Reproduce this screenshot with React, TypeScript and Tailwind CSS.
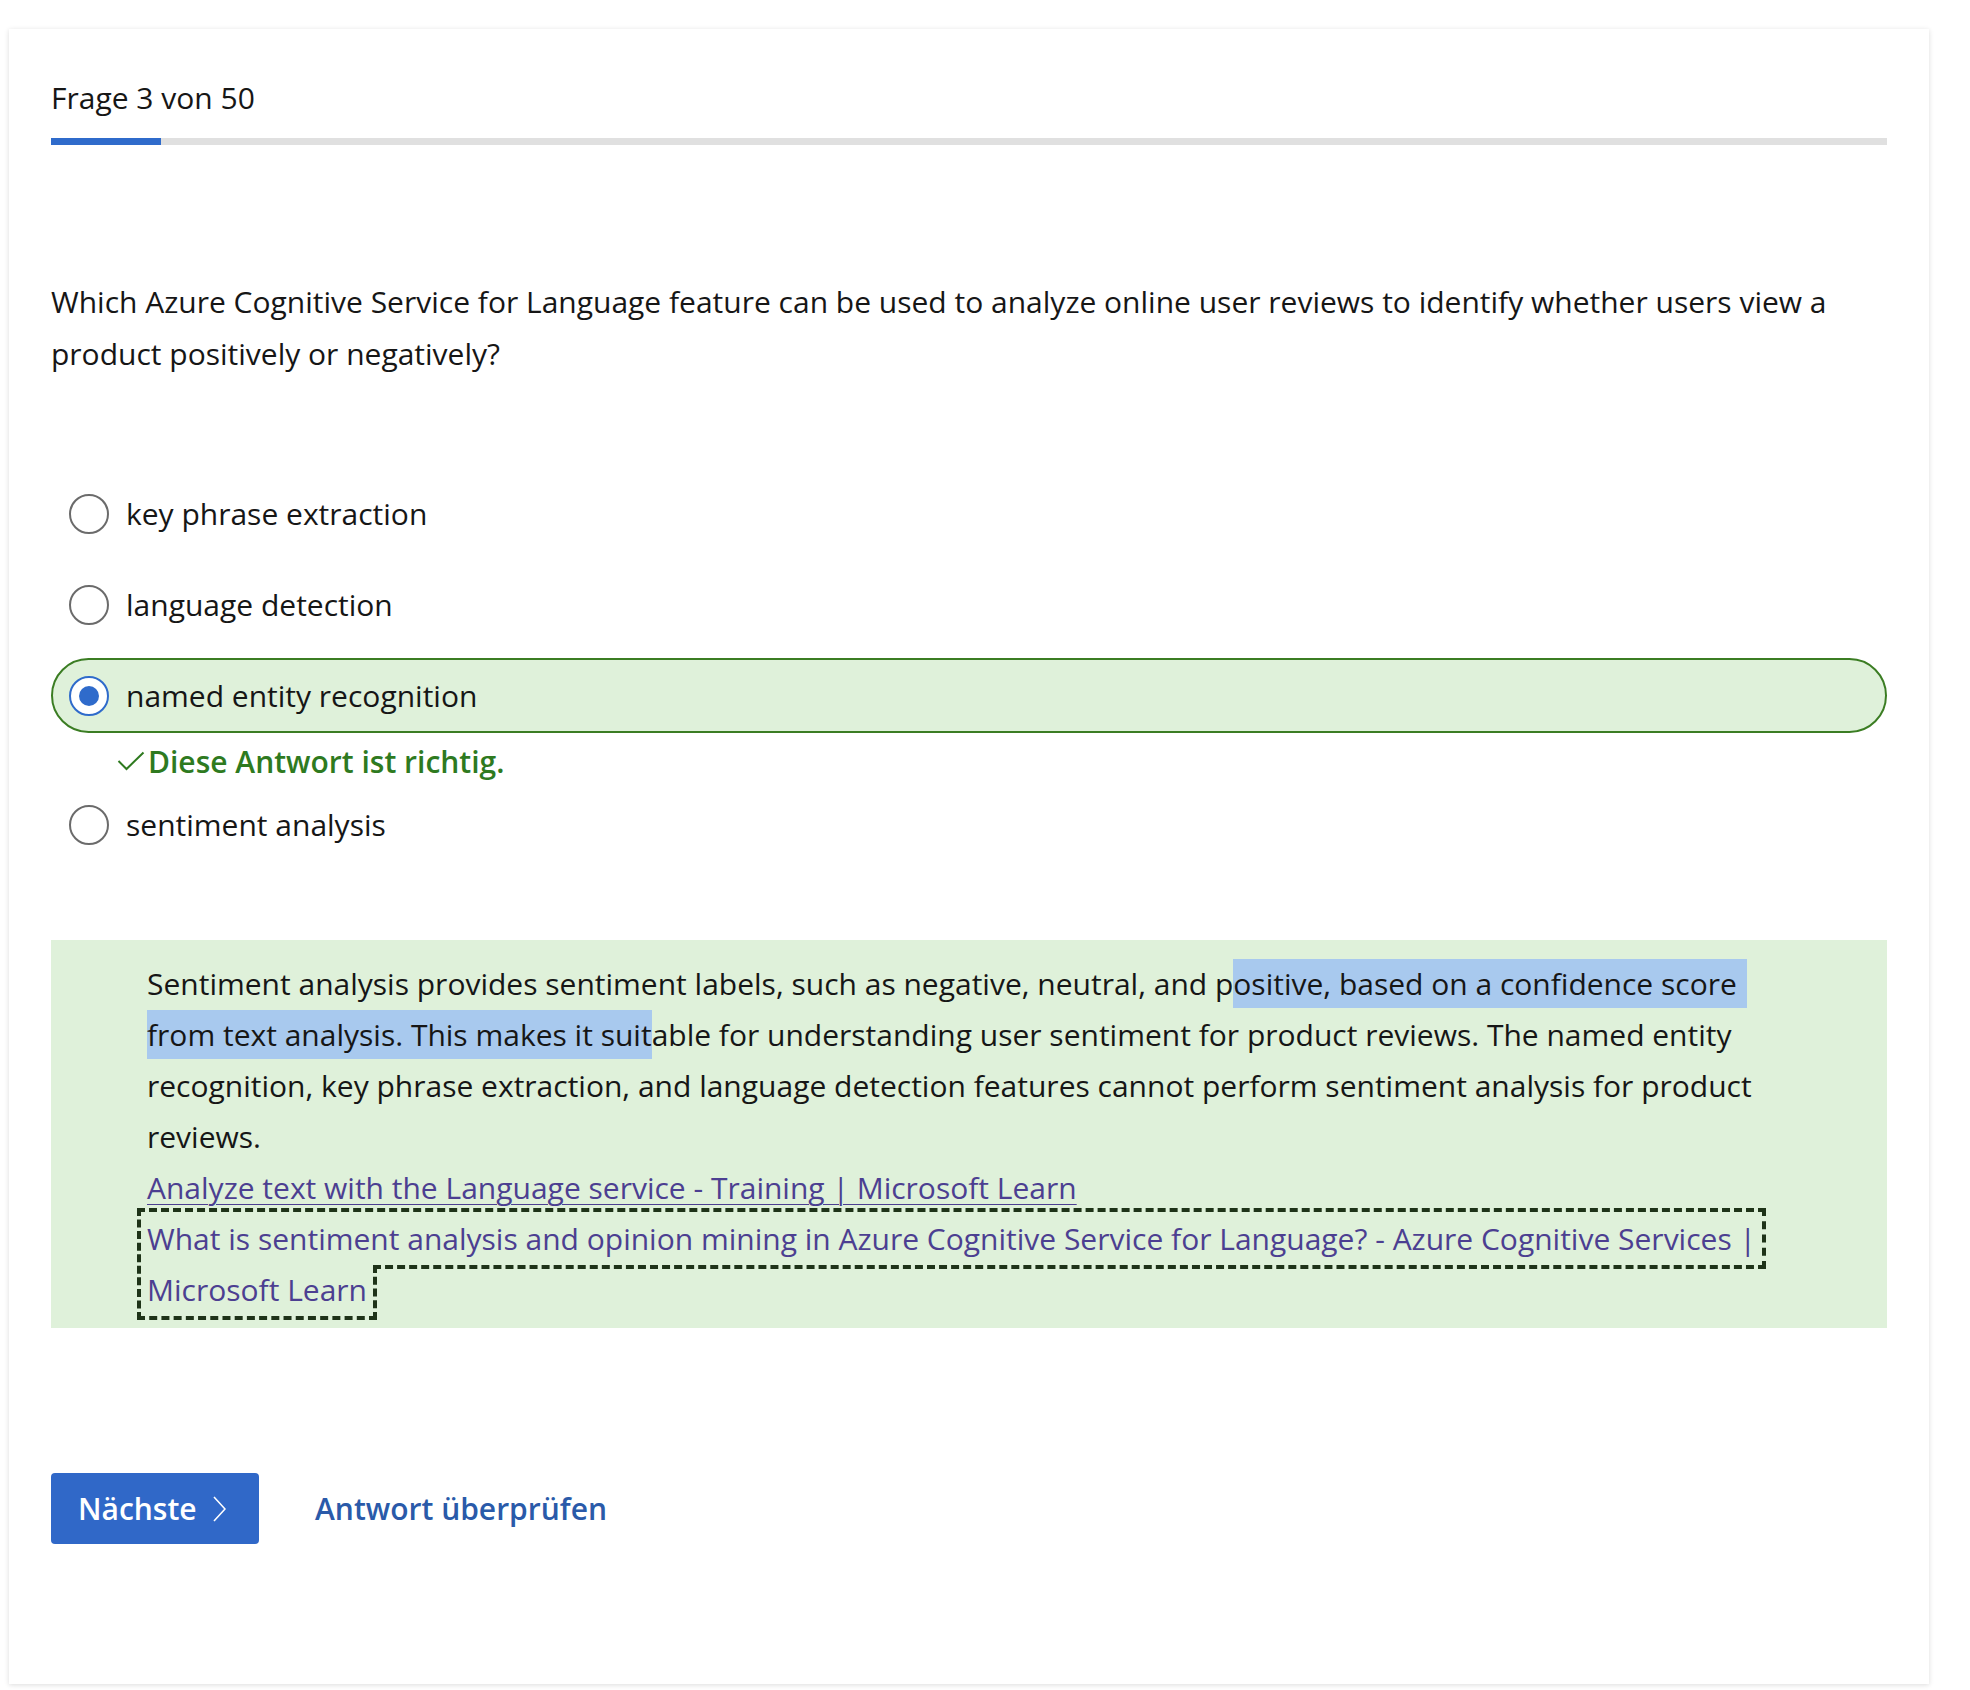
const OPTIONS = [
  "key phrase extraction",
  "language detection",
  "named entity recognition",
  "sentiment analysis",
];

const SELECTED = 2;

function Radio({ checked }: { checked: boolean }) {
  if (checked) {
    return (
      <span className="flex h-[40px] w-[40px] shrink-0 items-center justify-center rounded-full border-[2px] border-[#2f6bcb] bg-white">
        <span className="h-[20px] w-[20px] rounded-full bg-[#2f6bcb]" />
      </span>
    );
  }
  return <span className="h-[40px] w-[40px] shrink-0 rounded-full border-[2px] border-[#6b6b6b] bg-white" />;
}

export default function App() {
  return (
    <div
      className="min-h-screen bg-white pl-[9px] pt-[29px] text-[#161616]"
      style={{ fontFamily: '"Segoe UI", "Open Sans", sans-serif' }}
    >
      <div className="flex h-[1655px] w-[1920px] flex-col bg-white px-[42px] pt-[49px] shadow-[0_1px_5px_rgba(0,0,0,0.14)]">
        {/* Header */}
        <div className="text-[30px] leading-[40px]">Frage 3 von 50</div>
        <div className="mt-[20px] h-[7px] w-full bg-[#e0e0e0]">
          <div className="h-full w-[6%] bg-[#2f6bcb]" />
        </div>

        {/* Question */}
        <p className="mt-[131px] text-[30px] leading-[52px]">
          Which Azure Cognitive Service for Language feature can be used to analyze online user reviews to identify
          whether users view a product positively or negatively?
        </p>

        {/* Options */}
        <div className="mt-[96px] flex flex-col">
          {OPTIONS.map((opt, i) => {
            const selected = i === SELECTED;
            return (
              <div key={opt} className={i === 1 || i === 2 ? "mt-[16px]" : i === 3 ? "mt-[6px]" : ""}>
                <div
                  className={`flex h-[75px] items-center gap-[17px] rounded-full text-[30px] ${
                    selected ? "border-[2px] border-[#3b7d23] bg-[#dff1da] pl-[16px]" : "pl-[18px]"
                  }`}
                >
                  <Radio checked={selected} />
                  <span>{opt}</span>
                </div>
                {selected && (
                  <div className="mt-[8px] flex h-[40px] items-center gap-[3px] pl-[66px] text-[30px] font-semibold text-[#2e7a1f]">
                    <svg width="28" height="20" viewBox="0 0 28 20" fill="none" stroke="currentColor" strokeWidth="2">
                      <polyline points="1.5,10 9.5,18 26.5,1.5" />
                    </svg>
                    <span>Diese Antwort ist richtig.</span>
                  </div>
                )}
              </div>
            );
          })}
        </div>

        {/* Explanation */}
        <div className="mt-[78px] bg-[#dff1da] pb-[13px] pl-[96px] pr-[96px] pt-[18px] text-[30px] leading-[51px]">
          <p>
            Sentiment analysis provides sentiment labels, such as negative, neutral, and p
            <span className="bg-[#a8c9ee] py-[4px] pr-[10px]">ositive, based on a confidence score</span>{" "}
            <span className="bg-[#a8c9ee] py-[4px]">from text analysis. This makes it suit</span>
            able for understanding user sentiment for product reviews. The named entity recognition, key phrase
            extraction, and language detection features cannot perform sentiment analysis for product reviews.
          </p>
          <div>
            <a href="#" className="text-[#4c3f91] underline decoration-1 underline-offset-[5px]">
              Analyze text with the Language service - Training | Microsoft Learn
            </a>
          </div>
          <div>
            <a href="#" className="text-[#4c3f91] outline-4 outline-offset-[6px] outline-[#1e3318] outline-dashed">
              What is sentiment analysis and opinion mining in Azure Cognitive Service for Language? - Azure Cognitive
              Services | Microsoft Learn
            </a>
          </div>
        </div>

        {/* Actions */}
        <div className="mt-[145px] flex items-center gap-[56px]">
          <button className="flex h-[71px] w-[208px] items-center gap-[16px] rounded-[4px] bg-[#3068c8] pl-[27px] text-[30px] font-semibold text-white">
            Nächste
            <svg width="13" height="26" viewBox="0 0 13 26" fill="none" stroke="currentColor" strokeWidth="1.6">
              <polyline points="1,1 12,13 1,25" />
            </svg>
          </button>
          <a href="#" className="text-[30px] font-semibold text-[#2a5aa9]">
            Antwort überprüfen
          </a>
        </div>
      </div>
    </div>
  );
}
